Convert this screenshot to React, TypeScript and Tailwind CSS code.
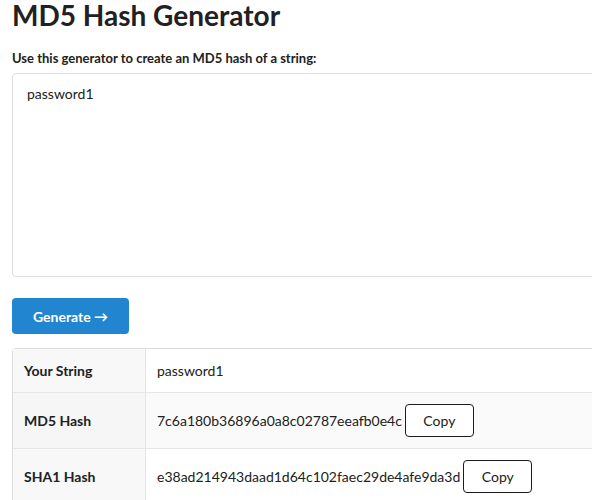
import React from "react";

export default function App() {
  const font = { fontFamily: "Lato, 'Helvetica Neue', Arial, sans-serif" };
  return (
    <div className="w-[592px] h-[500px] overflow-hidden bg-white text-[#212121]" style={font}>
      <div className="w-[800px] pl-[12px]">
        <h1 className="text-[28px] leading-[30px] font-bold m-0">MD5 Hash Generator</h1>
        <div className="mt-[20px] text-[13px] leading-[16px] font-bold">
          Use this generator to create an MD5 hash of a string:
        </div>
        <div className="mt-[7px] h-[204px] border border-[#dedede] rounded-[4px] px-[14px] py-[11px] text-[14px] leading-[18px]">
          password1
        </div>
        <button className="mt-[21px] h-[36px] px-[21px] pt-[1px] rounded-[4px] bg-[#2185d0] text-white text-[14px] leading-[14px] font-bold">
          Generate →
        </button>
        <table className="mt-[14px] w-full border-separate border-spacing-0 border border-[#dcdcdd] rounded-[4px] text-[14px]">
          <tbody>
            <tr>
              <td className="w-[133px] px-[11px] py-[11px] leading-[21px] font-bold bg-[#f8f8f8] border-r border-[#e6e6e6]">
                Your String
              </td>
              <td className="px-[11px] py-[11px] leading-[21px]">password1</td>
            </tr>
            <tr>
              <td className="px-[11px] py-[11px] font-bold bg-[#f6f6f7] border-t border-r border-[#e6e6e6]">
                MD5 Hash
              </td>
              <td className="px-[11px] py-[11px] bg-[#fafafb] border-t border-[#e6e6e6]">
                <div className="flex items-center gap-[3px]">
                  <span>7c6a180b36896a0a8c02787eeafb0e4c</span>
                  <button className="h-[33px] w-[69px] border border-[#1b1c1d] rounded-[4px] bg-white text-[14px]">
                    Copy
                  </button>
                </div>
              </td>
            </tr>
            <tr>
              <td className="px-[11px] py-[11px] font-bold bg-[#f8f8f8] border-t border-r border-[#e6e6e6]">
                SHA1 Hash
              </td>
              <td className="px-[11px] py-[11px] border-t border-[#e6e6e6]">
                <div className="flex items-center gap-[3px]">
                  <span>e38ad214943daad1d64c102faec29de4afe9da3d</span>
                  <button className="h-[33px] w-[69px] border border-[#1b1c1d] rounded-[4px] bg-white text-[14px]">
                    Copy
                  </button>
                </div>
              </td>
            </tr>
          </tbody>
        </table>
      </div>
    </div>
  );
}
